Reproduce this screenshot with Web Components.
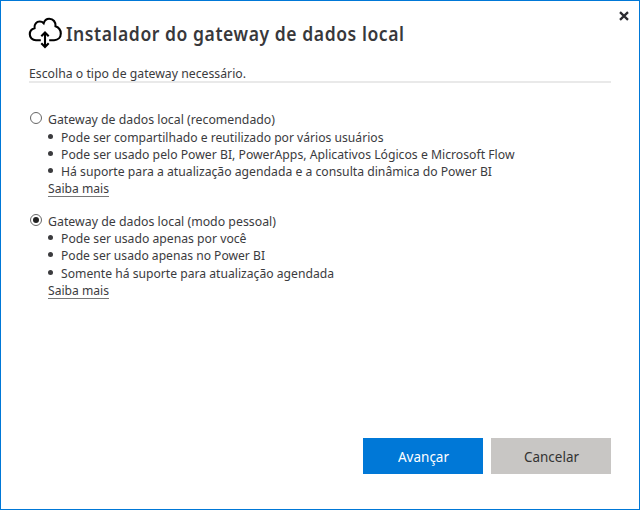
<!DOCTYPE html>
<html lang="pt-BR">
<head>
<meta charset="utf-8">
<title>Instalador do gateway de dados local</title>
<style>
html,body{margin:0;height:100%;overflow:hidden;background:#fff}
body{font-family:"Noto Sans","Open Sans",sans-serif;color:#3b3b3e}
</style>
</head>
<body>
<setup-window>
  <window-title slot="title"><fit-text width="338.5">Instalador do gateway de dados local</fit-text></window-title>
  <fit-text slot="intro" width="217">Escolha o tipo de gateway necessário.</fit-text>
  <gateway-option>
    <fit-text slot="label" width="227">Gateway de dados local (recomendado)</fit-text>
    <bullet-item class="first"><fit-text width="322.5">Pode ser compartilhado e reutilizado por vários usuários</fit-text></bullet-item>
    <bullet-item><fit-text width="453.5">Pode ser usado pelo Power BI, PowerApps, Aplicativos Lógicos e Microsoft Flow</fit-text></bullet-item>
    <bullet-item><fit-text width="431">Há suporte para a atualização agendada e a consulta dinâmica do Power BI</fit-text></bullet-item>
    <fit-text slot="link" width="61">Saiba mais</fit-text>
  </gateway-option>
  <gateway-option checked>
    <fit-text slot="label" width="228">Gateway de dados local (modo pessoal)</fit-text>
    <bullet-item><fit-text width="185.5">Pode ser usado apenas por você</fit-text></bullet-item>
    <bullet-item><fit-text width="204">Pode ser usado apenas no Power BI</fit-text></bullet-item>
    <bullet-item class="last"><fit-text width="273">Somente há suporte para atualização agendada</fit-text></bullet-item>
    <fit-text slot="link" width="61">Saiba mais</fit-text>
  </gateway-option>
  <action-button slot="actions" primary><fit-text width="51">Avançar</fit-text></action-button>
  <action-button slot="actions"><fit-text width="55">Cancelar</fit-text></action-button>
</setup-window>
<script>
const define = (name, html, extra) => {
  const t = document.createElement('template');
  t.innerHTML = html;
  customElements.define(name, class extends HTMLElement {
    constructor() {
      super();
      this.attachShadow({mode: 'open'}).append(t.content.cloneNode(true));
    }
    connectedCallback() { if (extra) extra(this); }
  });
};

define('setup-window', `
<style>
:host{display:flex;flex-direction:column;box-sizing:border-box;width:640px;height:510px;border:1px solid #0078d7;background:#fff;position:relative;padding:13px 28px 35px}
header{height:48px}
.intro{height:19px;line-height:22px;font-size:13px;border-bottom:2px solid #e9e9e9;display:flex}
main{padding-top:28px;flex:1;display:flex;flex-direction:column;gap:16px}
footer{display:flex;justify-content:flex-end;gap:8px}
.close{position:absolute;right:10px;top:10px;width:10px;height:10px}
</style>
<svg class="close" viewBox="0 0 10 10"><path d="M1 1.2 9 8.8M9 1.2 1 8.8" stroke="#2b2b30" stroke-width="2.3" fill="none"/></svg>
<header><slot name="title"></slot></header>
<div class="intro"><slot name="intro"></slot></div>
<main><slot></slot></main>
<footer><slot name="actions"></slot></footer>`);

define('window-title', `
<style>
:host{display:flex;align-items:flex-start;font-size:18.8px;font-weight:600;color:#38383b;letter-spacing:.6px}
svg{width:35px;height:35px;flex:none;margin-top:2px;margin-left:-1px}
.t{margin-left:3px;line-height:40px}
</style>
<svg viewBox="0 0 35 35" fill="none" stroke="#000" stroke-width="2.1">
<path d="M12.800 24.200H8C4.300 24.200 1.800 21.500 1.800 18.300c0-3.200 2-5.500 4.700-6.100C6 8.200 8.600 5.500 11.700 5.500c1.600 0 3 .6 4 1.700C16.600 4.300 18.700 2.800 21.200 2.800c4.200 0 6.700 3.300 6.300 7.500 3.200 1.200 5.300 3.900 5.300 7.200 0 4-2.900 6.700-6.700 6.700H21.200"/>
<path d="M17 17V31M13.300 20.300l3.700-3.700 3.700 3.700M13.300 27.300l3.700 3.700 3.700-3.700"/>
</svg><span class="t"><slot></slot></span>`);

define('gateway-option', `
<style>
:host{display:grid;grid-template-columns:19px 1fr;font-size:13px;line-height:17px}
.radio{box-sizing:border-box;width:12px;height:12px;border:1px solid #666;border-radius:50%;margin:1px 0 0 1px;display:grid;place-items:center}
:host([checked]) .radio::after{content:"";width:6px;height:6px;border-radius:50%;background:#222}
.label{display:flex}
.body{grid-column:2;display:flex;flex-direction:column;align-items:flex-start}
.link{display:flex;height:17px;box-sizing:border-box;border-bottom:1px solid #777;line-height:17px}
</style>
<span class="radio"></span><span class="label"><slot name="label"></slot></span>
<div class="body"><slot></slot><span class="link"><slot name="link"></slot></span></div>`);

define('bullet-item', `
<style>
:host{display:flex;height:17px;line-height:17px}
:host(.first),:host(.last){padding-top:1px}
i{width:5px;height:5px;border-radius:50%;background:#3b3b3e;margin:5px 8px 0 0}
</style><i></i><slot></slot>`);

define('action-button', `
<style>
:host{display:flex;align-items:center;justify-content:center;width:120px;height:36px;background:#c8c6c4;color:#333;font-size:14.5px}
:host([primary]){background:#0078d7;color:#fff}
</style><slot></slot>`);

/* Condenses a line so that it spans the given width. */
define('fit-text', `
<style>:host{display:block;white-space:nowrap}span{display:inline-block;transform-origin:0 50%}</style><span><slot></slot></span>`, el => {
  const span = el.shadowRoot.querySelector('span');
  const width = +el.getAttribute('width');
  const natural = span.getBoundingClientRect().width;
  el.style.width = width + 'px';
  span.style.transform = 'scaleX(' + width / natural + ')';
});
</script>
</body>
</html>
